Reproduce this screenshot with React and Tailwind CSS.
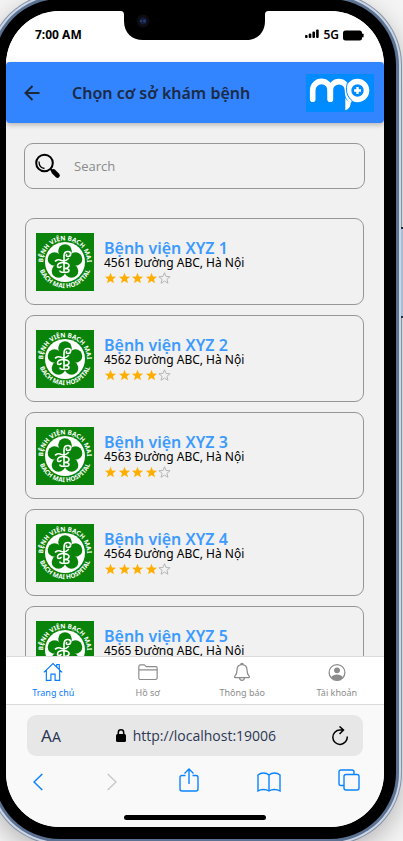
const hospitals = [1, 2, 3, 4, 5].map((n) => ({
  id: n,
  name: `Bệnh viện XYZ ${n}`,
  address: `456${n} Đường ABC, Hà Nội`,
  rating: 4,
}));

function StatusBar() {
  return (
    <div className="flex h-[51px] shrink-0 items-start justify-between bg-white pt-4 pr-5 pl-[29px] text-black">
      <span className="text-xs leading-4 font-bold">7:00 AM</span>
      <div className="flex items-center gap-1">
        <svg className="h-3 w-[14px]" viewBox="0 0 14 12" aria-hidden="true">
          <rect x="0" y="6" width="2.6" height="3" rx="1" />
          <rect x="3.7" y="4.500" width="2.6" height="4.500" rx="1" />
          <rect x="7.4" y="2.500" width="2.6" height="6.500" rx="1" />
          <rect x="11.1" y="0.500" width="2.6" height="8.500" rx="1" />
        </svg>
        <span className="text-xs leading-4 font-semibold">5G</span>
        <svg className="h-[11px] w-[21px]" viewBox="0 0 21 11" aria-hidden="true">
          <rect x="0" y="0.500" width="19" height="10" rx="2.5" />
          <rect x="19" y="3.500" width="1.6" height="4" rx="0.8" />
        </svg>
      </div>
    </div>
  );
}

function Notch() {
  return (
    <svg
      className="absolute top-0 left-1/2 h-[31px] w-[150px] -translate-x-[75px]"
      viewBox="0 0 150 31"
      aria-hidden="true"
    >
      <path d="M0 0C3 0 4 1 4 4v6c0 12 8 19 19 19h103c11 0 19-7 19-19V4c0-3 1-4 4-4z" fill="#000" />
      <circle cx="23" cy="10" r="6.5" fill="#0c0d12" />
      <circle cx="23" cy="10" r="3.5" fill="#151b38" />
      <circle cx="24.5" cy="10" r="1.6" fill="#263a80" />
      <circle cx="21" cy="10" r="1" fill="#24506a" />
    </svg>
  );
}

function BrandLogo() {
  return (
    <svg className="h-[38px] w-[68px] shrink-0" viewBox="0 0 68 38" role="img" aria-label="mp">
      <rect width="68" height="38" fill="#008cff" />
      <g fill="none" stroke="#fff" strokeWidth="5.600">
        <path d="M6.700 25.300V16.200a8.800 8.800 0 0 1 17.600 0V25.300" strokeLinecap="round" />
        <path d="M24.300 16.200a8.600 8.600 0 0 1 17.200 0c0 4.500 1 8.500 4.500 10.500" />
      </g>
      <path d="M24.300 16.200V25.300" stroke="#fff" strokeWidth="5.600" strokeLinecap="round" />
      <circle cx="51.500" cy="16.500" r="9" fill="none" stroke="#fff" strokeWidth="5.600" />
      <path d="M41.500 8.500C39.300 15.500 40.300 22.500 46.500 27" fill="none" stroke="#008cff" strokeWidth="1" />
      <path d="M39.300 24c1.200 2.200 3 3.700 5.400 4.500 0 4-1.800 6.700-5.400 7.700z" fill="#fff" />
      <path d="M51.500 13v7M48 16.500h7" stroke="#fff" strokeWidth="2.400" />
    </svg>
  );
}

function AppHeader() {
  return (
    <header className="z-10 flex h-[61px] shrink-0 items-center rounded-[4px] bg-[#3384ff] pr-[10px] pl-3 shadow-[0_2px_5px_rgba(0,0,0,0.25)]">
      <button type="button" aria-label="Quay lại" className="flex w-[27px] justify-center">
        <svg className="h-4 w-4" viewBox="0 0 16 16" fill="none" stroke="#1d2939" strokeWidth="2" aria-hidden="true">
          <path d="M15.500 8H2M8.500 1L1.500 8l7 7" />
        </svg>
      </button>
      <h1 className="ml-[27px] flex-1 text-base leading-6 font-semibold whitespace-nowrap text-[#1c2b45]">
        Chọn cơ sở khám bệnh
      </h1>
      <BrandLogo />
    </header>
  );
}

function SearchBox() {
  return (
    <label className="mr-[19px] ml-[18px] mt-5 flex h-[46px] shrink-0 items-center rounded-[9px] border border-[#969696] pl-[10px]">
      <svg className="h-[26px] w-[26px] shrink-0" viewBox="0 0 26 26" fill="none" stroke="#000" aria-hidden="true">
        <circle cx="9.500" cy="10" r="8.300" strokeWidth="2" />
        <path d="M4 8.500c0 4 2 6.500 5.500 7" strokeWidth="1.3" />
        <path d="M15.500 16l2 2" strokeWidth="2.2" />
        <path d="M18.500 18.500l4 4" strokeWidth="4.600" strokeLinecap="round" />
      </svg>
      <input
        type="text"
        placeholder="Search"
        aria-label="Search"
        className="ml-[13px] min-w-0 flex-1 bg-transparent pt-0.5 font-['Open_Sans','Noto_Sans',sans-serif] text-[13px] text-black outline-none placeholder:text-[#8a8a8a]"
      />
    </label>
  );
}

function HospitalLogo({ id }) {
  return (
    <svg className="h-[58px] w-[58px] shrink-0" viewBox="0 0 58 58" role="img" aria-label="Bệnh viện Bạch Mai">
      <defs>
        <path id={`top-${id}`} d="M7.500 34A22 22 0 1 1 50.500 34" />
        <path id={`bottom-${id}`} d="M2 28A27 27 0 0 0 56 28" />
      </defs>
      <rect width="58" height="58" fill="#098309" />
      <g fill="#fff" fontSize="6.400" fontWeight="700" textAnchor="middle">
        <text>
          <textPath href={`#top-${id}`} startOffset="50%">BỆNH VIỆN BẠCH MAI</textPath>
        </text>
        <text>
          <textPath href={`#bottom-${id}`} startOffset="50%">BACH MAI HOSPITAL</textPath>
        </text>
      </g>
      <circle cx="29" cy="29" r="20" fill="#fff" />
      <g fill="#098309">
        <circle cx="29" cy="18" r="6.800" />
        <circle cx="18.500" cy="26" r="6.800" />
        <circle cx="39.500" cy="26" r="6.800" />
        <circle cx="22.500" cy="38" r="6.800" />
        <circle cx="35.500" cy="38" r="6.800" />
        <circle cx="29" cy="29" r="9" />
      </g>
      <g fill="none" stroke="#fff" strokeWidth="1.600" strokeLinecap="round">
        <path d="M28 38V23c0-3 1.500-4.500 4-4.500 3.500 0 3.500 5 0 5-1.500 0-2-1-1.500-2" />
        <path d="M19.500 28c2-1.500 4-1.500 6-.5 2.500 1 5 0 7-2" />
        <path d="M28 29.500c-4 0-6.500 1.500-6.500 3.500s2.500 2 3.500.5" />
        <path d="M28 30c3-.5 5.500 1 5 3s-3 2.500-5 2.500c3 0 5 0 5 2s-3 2-5 1.500c-2 .5-4 0-4-1" />
      </g>
    </svg>
  );
}

function Star({ filled }) {
  return (
    <svg
      className="h-[13px] w-[13px]"
      viewBox="0 0 26 26"
      fill={filled ? "#ffae00" : "none"}
      stroke={filled ? "#ffae00" : "#b0b0b0"}
      strokeWidth={filled ? 0 : 1.8}
      aria-hidden="true"
    >
      <path d="M13 1.500l3 7.400 8.200.6-6.300 5.100 2 7.900-6.900-4.300-6.900 4.300 2-7.900-6.300-5.100 8.200-.6z" />
    </svg>
  );
}

function HospitalCard({ hospital }) {
  return (
    <li className="flex h-[87px] shrink-0 items-center gap-[10px] rounded-[9px] border border-[#969696] px-[10px]">
      <HospitalLogo id={hospital.id} />
      <div className="min-w-0">
        <h2 className="text-base leading-[18px] font-semibold text-[#3d9bff]">{hospital.name}</h2>
        <p className="text-xs leading-3 text-black">{hospital.address}</p>
        <div className="mt-[3px] flex w-[67px] justify-between" role="img" aria-label={`${hospital.rating}/5`}>
          {[1, 2, 3, 4, 5].map((n) => (
            <Star key={n} filled={n <= hospital.rating} />
          ))}
        </div>
      </div>
    </li>
  );
}

function HomeIcon() {
  return (
    <svg className="h-6 w-6" viewBox="0 0 24 24" fill="none" stroke="currentColor" strokeWidth="1.400" aria-hidden="true">
      <path d="M1 12.500L12 2l11 10.500M16.500 6V3h3v6M4 10v12h5.500v-7.500h5V22H20V10" />
    </svg>
  );
}

function FolderIcon() {
  return (
    <svg className="h-6 w-6" viewBox="0 0 24 24" fill="none" stroke="currentColor" strokeWidth="1.400" aria-hidden="true">
      <path d="M1 19V5.500Q1 3.500 3 3.500h4.500L10 5.500h11q2 0 2 2V19q0 2-2 2H3q-2 0-2-2zM1 9.500h22" />
    </svg>
  );
}

function BellIcon() {
  return (
    <svg className="h-6 w-6" viewBox="0 0 24 24" fill="none" stroke="currentColor" strokeWidth="1.500" aria-hidden="true">
      <path d="M12 3C8 3 6 6 6 9.500c0 5-1 6-2.500 7.500-.8 1-.3 1.700.5 1.700h16c.8 0 1.300-.7.5-1.700C19 15.500 18 14.500 18 9.500 18 6 16 3 12 3zM10.500 3q0-1.500 1.500-1.500T13.500 3M9 19q.5 3 3 3t3-3" />
    </svg>
  );
}

function AccountIcon() {
  return (
    <svg className="h-6 w-6" viewBox="0 0 24 24" fill="none" aria-hidden="true">
      <circle cx="12" cy="12.500" r="9.500" stroke="currentColor" strokeWidth="1.500" />
      <circle cx="12" cy="10" r="3.500" fill="currentColor" />
      <path d="M5 18.500c1.500-2.500 4-3.500 7-3.500s5.500 1 7 3.500c-1.500 2-4 3.500-7 3.500s-5.500-1.500-7-3.500z" fill="currentColor" />
    </svg>
  );
}

const tabs = [
  { label: "Trang chủ", Icon: HomeIcon, active: true },
  { label: "Hồ sơ", Icon: FolderIcon },
  { label: "Thông báo", Icon: BellIcon },
  { label: "Tài khoản", Icon: AccountIcon },
];

function TabBar() {
  return (
    <nav className="z-10 flex h-[49px] shrink-0 border-y border-[#dadada] bg-white">
      {tabs.map(({ label, Icon, active }) => (
        <a
          key={label}
          href="#"
          className={`flex flex-1 flex-col items-center pt-[5px] ${active ? "text-[#087cff]" : "text-[#8b8b8b]"}`}
        >
          <Icon />
          <span className="text-[9px] leading-[22px] whitespace-nowrap">{label}</span>
        </a>
      ))}
    </nav>
  );
}

function BrowserChrome() {
  return (
    <footer className="flex h-[122px] shrink-0 flex-col bg-[#f9f9f9] pt-[10px]">
      <div className="mx-[21px] flex h-[41px] items-center justify-between rounded-[9px] bg-[#e7e7e7] px-[14px] text-[#2b3854]">
        <button type="button" aria-label="Cỡ chữ" className="text-[17px] leading-6">
          A<span className="text-sm">A</span>
        </button>
        <div className="flex items-center gap-[7px]">
          <svg className="h-[13px] w-[10px]" viewBox="0 0 10 13" aria-hidden="true">
            <rect y="5" width="10" height="8" rx="1.500" fill="#000" />
            <path d="M2.300 6V3.500a2.700 2.700 0 0 1 5.400 0V6" fill="none" stroke="#000" strokeWidth="1.500" />
          </svg>
          <span className="font-['Open_Sans','Noto_Sans',sans-serif] text-sm leading-5">http://localhost:19006</span>
        </div>
        <button type="button" aria-label="Tải lại">
          <svg className="h-5 w-[18px]" viewBox="0 0 18 20" fill="none" stroke="#000" strokeWidth="1.500" aria-hidden="true">
            <path d="M16.200 10.500A7.200 7.200 0 1 1 9 4h3.500M8.500 0.500L12.500 4 8.500 8" />
          </svg>
        </button>
      </div>
      <div className="mt-[10px] grid h-8 grid-cols-[64fr_84fr_70fr_90fr_70fr] place-items-center text-[#0a84ff]">
        <button type="button" aria-label="Trang trước">
          <svg className="h-[18px] w-[10px]" viewBox="0 0 10 18" fill="none" stroke="currentColor" strokeWidth="1.500" aria-hidden="true">
            <path d="M9.300 1L1 9l8.300 8" />
          </svg>
        </button>
        <button type="button" aria-label="Trang sau" className="text-[#c9c9c9]">
          <svg className="h-[18px] w-[10px]" viewBox="0 0 10 18" fill="none" stroke="currentColor" strokeWidth="1.500" aria-hidden="true">
            <path d="M.7 1L9 9 .7 17" />
          </svg>
        </button>
        <button type="button" aria-label="Chia sẻ" className="-mt-1">
          <svg className="h-6 w-5" viewBox="0 0 20 24" fill="none" stroke="currentColor" strokeWidth="1.400" aria-hidden="true">
            <path d="M6.500 7.500H3q-2 0-2 2V21q0 2 2 2h14q2 0 2-2V9.500q0-2-2-2h-3.500M10 16V1.500M5.500 5.500L10 1l4.500 4.500" />
          </svg>
        </button>
        <button type="button" aria-label="Dấu trang">
          <svg className="h-5 w-6" viewBox="0 0 24 20" fill="none" stroke="currentColor" strokeWidth="1.400" aria-hidden="true">
            <path d="M12 3v16M12 3C9 .3 4 .3 1 3v16c3-2 8-2 11 0 3-2 8-2 11 0V3c-3-2.700-8-2.700-11 0z" />
          </svg>
        </button>
        <button type="button" aria-label="Các thẻ" className="-mt-1">
          <svg className="h-[22px] w-[22px]" viewBox="0 0 22 22" fill="none" stroke="currentColor" strokeWidth="1.400" aria-hidden="true">
            <path d="M6 16.500H3q-2 0-2-2V3q0-2 2-2h11q2 0 2 2v2.500" />
            <rect x="6" y="5.500" width="15" height="15.500" rx="2" />
          </svg>
        </button>
      </div>
      <div className="mx-auto mt-[17px] h-[5px] w-[142px] rounded-full bg-black" />
    </footer>
  );
}

export default function App() {
  return (
    <div className="relative h-screen overflow-hidden bg-[#f4f4f4] font-['Noto_Sans','Open_Sans',sans-serif]">
      <div className="relative -mt-[7px] mr-px -ml-3 flex h-[calc(100vh+11px)] rounded-[72px] bg-[#8392a8] p-px shadow-[0_8px_24px_rgba(0,0,0,0.25)]">
        <div className="flex min-w-0 flex-1 rounded-[71px] bg-[#cbd5e3] p-[2px]">
          <div className="flex min-w-0 flex-1 rounded-[69px] bg-[#5b7293] p-[3px]">
            <div className="flex min-w-0 flex-1 rounded-[66px] bg-black p-3">
              <main className="relative flex min-w-0 flex-1 flex-col overflow-hidden rounded-[54px] bg-[#f1f1f1]">
                <StatusBar />
                <Notch />
                <AppHeader />
                <div className="flex min-h-0 flex-1 flex-col overflow-hidden">
                  <SearchBox />
                  <ul className="mr-5 ml-[19px] mt-[29px] flex flex-col gap-[10px]">
                    {hospitals.map((h) => (
                      <HospitalCard key={h.id} hospital={h} />
                    ))}
                  </ul>
                </div>
                <TabBar />
                <BrowserChrome />
              </main>
            </div>
          </div>
        </div>
      </div>
      <div className="absolute top-[227px] right-0 h-[91px] w-0.5 border-y-2 border-[#202c40] bg-[#a9bdd6]" />
    </div>
  );
}
